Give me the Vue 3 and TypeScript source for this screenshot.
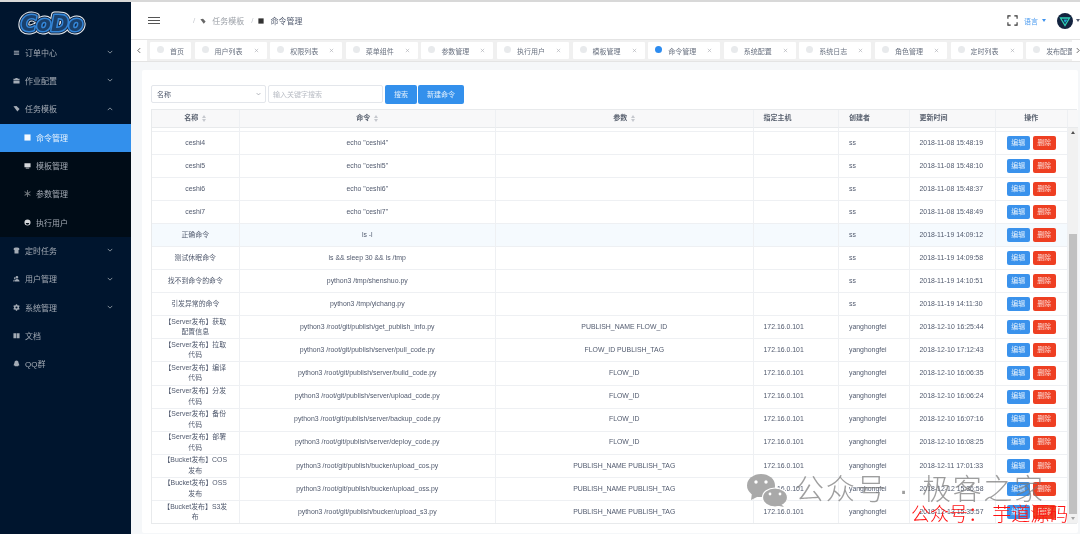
<script setup lang="ts">
type MenuItem = { text: string; icon: string; arrow?: "down" | "up"; sub?: boolean; active?: boolean }
type Row = { name: string; cmd: string; params: string; host: string; user: string; time: string; hover?: boolean }

const menu: MenuItem[] = [
	{ text: "订单中心", icon: "list", arrow: "down" },
	{ text: "作业配置", icon: "case", arrow: "down" },
	{ text: "任务模板", icon: "tag", arrow: "up" },
	{ text: "命令管理", icon: "square", sub: true, active: true },
	{ text: "模板管理", icon: "monitor", sub: true },
	{ text: "参数管理", icon: "star", sub: true },
	{ text: "执行用户", icon: "face", sub: true },
	{ text: "定时任务", icon: "shirt", arrow: "down" },
	{ text: "用户管理", icon: "people", arrow: "down" },
	{ text: "系统管理", icon: "gear", arrow: "down" },
	{ text: "文档", icon: "book" },
	{ text: "QQ群", icon: "qq" },
]

const tabs = ["首页", "用户列表", "权限列表", "菜单组件", "参数管理", "执行用户", "模板管理", "命令管理", "系统配置", "系统日志", "角色管理", "定时列表", "发布配置"]

const ip = "172.16.0.101"
const yhf = "yanghongfei"
const base = "python3 /root/git/publish/"

const rows: Row[] = [
	{ name: "ceshi4", cmd: 'echo "ceshi4"', params: "", host: "", user: "ss", time: "2018-11-08 15:48:19" },
	{ name: "ceshi5", cmd: 'echo "ceshi5"', params: "", host: "", user: "ss", time: "2018-11-08 15:48:10" },
	{ name: "ceshi6", cmd: 'echo "ceshi6"', params: "", host: "", user: "ss", time: "2018-11-08 15:48:37" },
	{ name: "ceshi7", cmd: 'echo "ceshi7"', params: "", host: "", user: "ss", time: "2018-11-08 15:48:49" },
	{ name: "正确命令", cmd: "ls -l", params: "", host: "", user: "ss", time: "2018-11-19 14:09:12", hover: true },
	{ name: "测试休眠命令", cmd: "ls && sleep 30 && ls /tmp", params: "", host: "", user: "ss", time: "2018-11-19 14:09:58" },
	{ name: "找不到命令的命令", cmd: "python3 /tmp/shenshuo.py", params: "", host: "", user: "ss", time: "2018-11-19 14:10:51" },
	{ name: "引发异常的命令", cmd: "python3 /tmp/yichang.py", params: "", host: "", user: "ss", time: "2018-11-19 14:11:30" },
	{ name: "【Server发布】获取配置信息", cmd: base + "get_publish_info.py", params: "PUBLISH_NAME FLOW_ID", host: ip, user: yhf, time: "2018-12-10 16:25:44" },
	{ name: "【Server发布】拉取代码", cmd: base + "server/pull_code.py", params: "FLOW_ID PUBLISH_TAG", host: ip, user: yhf, time: "2018-12-10 17:12:43" },
	{ name: "【Server发布】编译代码", cmd: base + "server/bulid_code.py", params: "FLOW_ID", host: ip, user: yhf, time: "2018-12-10 16:06:35" },
	{ name: "【Server发布】分发代码", cmd: base + "server/upload_code.py", params: "FLOW_ID", host: ip, user: yhf, time: "2018-12-10 16:06:24" },
	{ name: "【Server发布】备份代码", cmd: base + "server/backup_code.py", params: "FLOW_ID", host: ip, user: yhf, time: "2018-12-10 16:07:16" },
	{ name: "【Server发布】部署代码", cmd: base + "server/deploy_code.py", params: "FLOW_ID", host: ip, user: yhf, time: "2018-12-10 16:08:25" },
	{ name: "【Bucket发布】COS发布", cmd: base + "bucker/upload_cos.py", params: "PUBLISH_NAME PUBLISH_TAG", host: ip, user: yhf, time: "2018-12-11 17:01:33" },
	{ name: "【Bucket发布】OSS发布", cmd: base + "bucker/upload_oss.py", params: "PUBLISH_NAME PUBLISH_TAG", host: ip, user: yhf, time: "2018-12-12 15:36:58" },
	{ name: "【Bucket发布】S3发布", cmd: base + "bucker/upload_s3.py", params: "PUBLISH_NAME PUBLISH_TAG", host: ip, user: yhf, time: "2018-12-13 15:35:57" },
]
</script>

<template>
	<div class="page">
		<aside class="side">
			<div class="logo">
				<svg width="74" height="26" viewBox="0 0 74 26">
					<g font-family="DejaVu Sans" font-weight="700" font-style="italic" font-size="22">
						<text x="37" y="20" text-anchor="middle" textLength="62" lengthAdjust="spacingAndGlyphs" fill="#fff" stroke="#e8edf2" stroke-width="7" stroke-linejoin="round">CoDo</text>
						<text x="37" y="20" text-anchor="middle" textLength="62" lengthAdjust="spacingAndGlyphs" fill="#10233f" stroke="#10233f" stroke-width="5" stroke-linejoin="round">CoDo</text>
						<text x="37" y="20" text-anchor="middle" textLength="62" lengthAdjust="spacingAndGlyphs" fill="#3486d8" stroke="#3486d8" stroke-width="3.200" stroke-linejoin="round">CoDo</text>
						<text x="37" y="20" text-anchor="middle" textLength="62" lengthAdjust="spacingAndGlyphs" fill="#10233f" opacity="0.7">CoDo</text>
					</g>
				</svg>
			</div>
			<div v-for="m in menu" :key="m.text" class="item" :class="{ sub: m.sub, active: m.active }">
				<svg class="mi" viewBox="0 0 8 8">
					<path v-if="m.icon === 'list'" d="M1 2h6v1H1zM1 4h6v1H1zM1 6h6v.8H1z" />
					<path v-else-if="m.icon === 'case'" d="M3 1h2l.6 1H7.500v2H.5V2h1.900zM.5 4.600h7V7.500h-7z" />
					<path v-else-if="m.icon === 'tag'" d="M.5 1.500 4 1l3.500 3.500L5 7.500z" />
					<path v-else-if="m.icon === 'square'" d="M.5.5h7v7h-7z" />
					<path v-else-if="m.icon === 'monitor'" d="M.5 1.500h7v4.500h-7zM2 6.500h4v1H2z" />
					<path v-else-if="m.icon === 'star'" opacity="0.55" d="M3.500 0h1v3l2.600-1.500.5.900L5 4l2.600 1.600-.5.900L4.500 5v3h-1V5L.9 6.500.4 5.600 3 4 .4 2.400l.5-.9L3.500 3z" />
					<path v-else-if="m.icon === 'face'" fill-rule="evenodd" d="M4 .5a3.500 3.500 0 1 1 0 7 3.500 3.500 0 0 1 0-7zM2 4.500h4a2 2 0 0 1-4 0z" />
					<path v-else-if="m.icon === 'shirt'" d="M1 1l2-.5h2L7 1l.3 2-1 .4v4H1.700v-4l-1-.4z" />
					<path v-else-if="m.icon === 'people'" d="M4.500 1a1.500 1.500 0 1 1 0 3 1.500 1.500 0 0 1 0-3zM2 7.500c0-2 1-3 2.500-3S7.500 5.500 7.500 7.500zM2 2.500A1 1 0 1 1 2 4.500 1 1 0 0 1 2 2.500zM.3 7.500C.3 6 1 5 2.300 5 1.700 5.800 1.500 6.500 1.500 7.500z" />
					<path v-else-if="m.icon === 'gear'" fill-rule="evenodd" d="M3.300.3h1.400l.3 1 .9.5 1-.3.700 1.200-.8.700v1.200l.8.700-.7 1.200-1-.3-.9.5-.3 1H3.300l-.3-1-.9-.5-1 .3-.7-1.200.8-.7V3.400l-.8-.7.7-1.200 1 .3.9-.5zM4 2.800a1.200 1.200 0 1 0 0 2.400 1.200 1.200 0 0 0 0-2.400z" />
					<path v-else-if="m.icon === 'book'" d="M.5 1.500h3.200v5.500H.5zM4.300 1.500h3.200v5.500H4.300z" />
					<path v-else d="M4 .5c1.500 0 2.300 1.200 2.300 2.500 0 .6.900 1.800.9 3 0 .6-.5.500-.9 0 0 .6-.3 1-.6 1.200l-3.400 0c-.3-.2-.6-.6-.6-1.200-.4.500-.9.600-.9 0 0-1.200.9-2.400.9-3C1.700 1.700 2.500.5 4 .5z" />
				</svg>
				<span class="label">{{ m.text }}</span>
				<svg v-if="m.arrow" class="chev" viewBox="0 0 8 5">
					<path :d="m.arrow === 'down' ? 'M1 1l3 3 3-3' : 'M1 4l3-3 3 3'" />
				</svg>
			</div>
		</aside>

		<main class="main">
			<header class="top">
				<div class="burger"><i /><i /><i /></div>
				<nav class="crumbs">
					<span class="sep">/</span>
					<svg class="ci" viewBox="0 0 8 8"><path d="M.5 1.500 4 1l3.500 3.500L5 7.500z" /></svg>
					<span class="cname">任务模板</span>
					<span class="sep">/</span>
					<svg class="ci dark" viewBox="0 0 8 8"><path d="M.5.500h7v7h-7z" /></svg>
					<span class="cname cur">命令管理</span>
				</nav>
				<div class="tools">
					<svg class="full" viewBox="0 0 12 12"><path d="M1 4V1h3M8 1h3v3M11 8v3H8M4 11H1V8" /></svg>
					<span class="lang">语言</span>
					<span class="caret blue" />
					<svg class="avatar" viewBox="0 0 16 16">
						<circle cx="8" cy="8" r="8" fill="#13233f" />
						<path d="M3.500 5h9L8 12.500z" fill="none" stroke="#2fd0b5" stroke-width="1.300" />
						<path d="M6.500 6.500h4L8 10z" fill="#1f9ed6" />
					</svg>
					<span class="caret" />
				</div>
			</header>

			<div class="tabbar">
				<div class="tab-prev"><svg viewBox="0 0 5 8"><path d="M4 1 1 4l3 3" /></svg></div>
				<div class="tabs">
					<div v-for="t in tabs" :key="t" class="tab" :class="{ home: t === '首页', on: t === '命令管理' }">
						<i class="dot" />
						<span class="tname">{{ t }}</span>
						<svg v-if="t !== '首页'" class="x" viewBox="0 0 6 6"><path d="M1 1l4 4M5 1 1 5" /></svg>
					</div>
				</div>
				<div class="tab-next"><svg viewBox="0 0 5 8"><path d="M1 1l3 3-3 3" /></svg></div>
			</div>

			<section class="wrap">
				<div class="card">
					<div class="search">
						<div class="select">
							<span>名称</span>
							<svg viewBox="0 0 8 5"><path d="M1 1l3 3 3-3" /></svg>
						</div>
						<div class="input">输入关键字搜索</div>
						<button class="btn">搜索</button>
						<button class="btn new">新建命令</button>
					</div>

					<div class="table">
						<div class="cols">
							<div class="row head">
								<div class="cell mid">名称<span class="sort" /></div>
								<div class="cell mid">命令<span class="sort" /></div>
								<div class="cell mid">参数<span class="sort" /></div>
								<div class="cell">指定主机</div>
								<div class="cell">创建者</div>
								<div class="cell">更新时间</div>
								<div class="cell mid">操作</div>
							</div>
							<div class="row stub">
								<div class="cell" /><div class="cell" /><div class="cell" /><div class="cell" />
								<div class="cell" /><div class="cell" /><div class="cell" />
							</div>
							<div v-for="r in rows" :key="r.name" class="row body" :class="{ hover: r.hover }">
								<div class="cell mid">{{ r.name }}</div>
								<div class="cell mid">{{ r.cmd }}</div>
								<div class="cell mid">{{ r.params }}</div>
								<div class="cell">{{ r.host }}</div>
								<div class="cell">{{ r.user }}</div>
								<div class="cell">{{ r.time }}</div>
								<div class="cell ops">
									<button class="op">编辑</button>
									<button class="op del">删除</button>
								</div>
							</div>
						</div>
						<div class="bar">
							<div class="bar-head" />
							<div class="track">
								<i class="arr up" />
								<div class="thumb" />
								<i class="arr dn" />
							</div>
						</div>
					</div>
				</div>
			</section>
		</main>

		<div class="mark">
			<svg class="wechat" width="41" height="33" viewBox="0 0 41 33">
				<ellipse cx="14" cy="11.500" rx="14" ry="11.500" fill="#a9a9a9" />
				<path d="M5 19l-1 7 8-4z" fill="#a9a9a9" />
				<ellipse cx="28" cy="23.500" rx="12.500" ry="9.500" fill="#a9a9a9" stroke="#fff" stroke-width="1.200" />
				<path d="M34 30l3 3-7-1.500z" fill="#a9a9a9" />
				<circle cx="9" cy="8" r="1.700" fill="#fff" />
				<circle cx="19" cy="8" r="1.700" fill="#fff" />
				<circle cx="23" cy="20" r="1.400" fill="#fff" />
				<circle cx="33" cy="20" r="1.400" fill="#fff" />
			</svg>
			<span class="mtext">公众号 · 极客之家</span>
		</div>
		<div class="redmark">公众号： 芋道源码</div>
	</div>
</template>

<style>
html,
body {
	margin: 0;
	background: #f5f7f9;
}
</style>

<style scoped>
.page {
	position: relative;
	display: flex;
	width: 1080px;
	height: 534px;
	box-sizing: border-box;
	border-top: 2px solid #d8d8d8;
	overflow: hidden;
	background: #f5f7f9;
	font-family: "Liberation Sans", "Noto Sans CJK SC", sans-serif;
	color: #515a6e;
	filter: blur(0.45px);
}

/* sidebar */
.side {
	flex: 0 0 131px;
	display: flex;
	flex-direction: column;
	background: #00152e;
}

.logo {
	height: 37px;
	padding: 9px 0 0 15px;
	box-sizing: border-box;
	overflow: hidden;
}

.item {
	display: flex;
	align-items: center;
	flex: 0 0 28.33px;
	box-sizing: border-box;
	padding: 0 0 2px 13px;
	color: #a3abb5;
	font-size: 8px;
}

.item.sub {
	padding-left: 24px;
	background: #000c17;
}

.item.active {
	background: #3390ec;
	color: #e8f3fd;
}

.mi {
	flex: 0 0 7px;
	width: 7px;
	height: 7px;
	margin-right: 5px;
	fill: #a3abb5;
}

.sub .mi {
	fill: #d5d8db;
}

.active .mi {
	fill: #f4f9fe;
}

.label {
	flex: 1;
}

.chev {
	width: 6px;
	height: 4px;
	margin-right: 18px;
	fill: none;
	stroke: #aab1ba;
	stroke-width: 1;
}

/* header */
.main {
	flex: 1;
	min-width: 0;
	display: flex;
	flex-direction: column;
}

.top {
	display: flex;
	align-items: center;
	flex: 0 0 37px;
	padding-left: 17px;
	background: #fff;
}

.burger {
	display: flex;
	flex-direction: column;
	gap: 2px;
	width: 12px;
}

.burger i {
	height: 1px;
	background: #555;
}

.crumbs {
	display: flex;
	align-items: center;
	margin-left: 33px;
	font-size: 8px;
	color: #9a9fa6;
}

.sep {
	color: #c5c8ce;
}

.ci {
	width: 6px;
	height: 6px;
	margin: 0 6px 0 5px;
	fill: #666;
}

.ci.dark {
	fill: #333;
}

.cname {
	margin-right: 7px;
}

.cur {
	color: #515a6e;
}

.tools {
	display: flex;
	align-items: center;
	margin-left: auto;
}

.full {
	width: 11px;
	height: 11px;
	fill: none;
	stroke: #333;
	stroke-width: 1.200;
	margin-right: 6px;
}

.lang {
	font-size: 7px;
	color: #4a9bf0;
	margin-right: 4px;
}

.caret {
	width: 0;
	height: 0;
	border: 2.500px solid transparent;
	border-top: 3px solid #515a6e;
	border-bottom: 0;
}

.caret.blue {
	border-top-color: #3f93ee;
	margin-right: 11px;
}

.avatar {
	width: 16px;
	height: 16px;
	margin-right: 3px;
}

/* tabs */
.tabbar {
	display: flex;
	flex: 0 0 23px;
	box-sizing: border-box;
	border-top: 1px solid #e4e4e4;
	border-bottom: 1px solid #e4e4e4;
	background: #f0f0f0;
	overflow: hidden;
}

.tab-prev {
	flex: 0 0 16px;
	display: flex;
	align-items: center;
	justify-content: center;
	background: #fff;
}

.tab-prev svg {
	width: 4px;
	height: 7px;
	fill: none;
	stroke: #444;
	stroke-width: 1;
}

.tabs {
	flex: 1;
	min-width: 0;
	display: flex;
	gap: 3.600px;
	padding: 2px 0 0 3px;
	overflow: hidden;
}

.tab-next {
	flex: 0 0 8px;
	display: flex;
	align-items: center;
	padding-left: 4.500px;
	box-sizing: border-box;
	background: #fff;
}

.tab-next svg {
	width: 4px;
	height: 7px;
	fill: none;
	stroke: #444;
	stroke-width: 1;
}

.tab {
	flex: 0 0 72px;
	display: flex;
	align-items: center;
	height: 17px;
	box-sizing: border-box;
	padding-left: 7px;
	background: #fff;
	border-radius: 1px;
	font-size: 7px;
	color: #6a7280;
}

.tab.home {
	flex-basis: 41px;
}

.dot {
	flex: 0 0 7px;
	height: 7px;
	border-radius: 50%;
	background: #e8eaec;
	margin: -2px 6px 0 0;
}

.on .dot {
	background: #2d8cf0;
}

.tname {
	flex: 0 0 auto;
}

.x {
	width: 5px;
	height: 5px;
	margin-left: 11px;
	fill: none;
	stroke: #a8abb2;
	stroke-width: 0.700;
}

/* card */
.wrap {
	flex: 1;
	min-height: 0;
	padding: 8px 2px 1px 11px;
}

.card {
	height: 100%;
	box-sizing: border-box;
	padding: 15px 1px 0 9px;
	background: #fff;
	border-radius: 2px;
}

.search {
	display: flex;
	align-items: center;
	gap: 2px;
	height: 18px;
	margin-bottom: 6px;
}

.select,
.input {
	width: 115px;
	height: 18px;
	box-sizing: border-box;
	border: 1px solid #e3e6eb;
	border-radius: 2px;
	display: flex;
	align-items: center;
	padding-left: 5px;
	font-size: 7px;
}

.select span {
	flex: 1;
}

.select svg {
	width: 5px;
	height: 4px;
	margin-right: 4px;
	fill: none;
	stroke: #8a8f99;
	stroke-width: 1;
}

.input {
	color: #b8bcc4;
	padding-left: 4px;
}

.btn {
	height: 19px;
	width: 32px;
	padding: 0;
	border: 0;
	border-radius: 2px;
	background: #3390ec;
	color: #e3f0fc;
	font: inherit;
	font-size: 7px;
}

.btn.new {
	width: 46px;
	margin-left: -1px;
}

/* table */
.table {
	display: flex;
	height: 415px;
	box-sizing: border-box;
	border: 1px solid #e8eaec;
	border-right: 0;
}

.cols {
	flex: 0 0 915.500px;
	min-width: 0;
	overflow: hidden;
}

.row {
	display: grid;
	grid-template-columns: 87.500px 256.500px 257.500px 85.500px 70.500px 86px 72.500px;
}

.cell {
	display: flex;
	align-items: center;
	min-width: 0;
	box-sizing: border-box;
	padding: 0 10px;
	border-right: 1px solid #eef0f3;
	border-bottom: 1px solid #eef0f3;
	font-size: 6.900px;
	line-height: 10.300px;
}

.cell.mid {
	justify-content: center;
	text-align: center;
}

.head {
	height: 18px;
	background: #f8f8f9;
}

.head .cell {
	font-size: 7px;
	font-weight: 700;
	color: #5a6270;
	border-bottom-color: #e8eaec;
}

.sort {
	position: relative;
	width: 4px;
	height: 7px;
	margin-left: 4px;
}

.sort::before,
.sort::after {
	content: "";
	position: absolute;
	left: 0;
	border: 2px solid transparent;
}

.sort::before {
	top: 0;
	border-bottom: 3px solid #c5c8ce;
	border-top: 0;
}

.sort::after {
	bottom: 0;
	border-top: 3px solid #c5c8ce;
	border-bottom: 0;
}

.stub {
	height: 4px;
}

.stub .cell {
	padding: 0;
}

.body {
	height: 23.050px;
}

.body:last-child .cell {
	border-bottom: 0;
}

.hover {
	background: #f5fafe;
}

.ops {
	justify-content: center;
	gap: 2.500px;
	padding: 0;
}

.op {
	width: 23.500px;
	height: 14px;
	padding: 0;
	border: 0;
	border-radius: 2px;
	background: #3a92ec;
	color: #e3f0fc;
	font: inherit;
	font-size: 6.900px;
}

.op.del {
	background: #ee3f22;
	color: #fbdcd6;
}

/* scrollbar */
.bar {
	flex: 0 0 10px;
	display: flex;
	flex-direction: column;
}

.bar-head {
	flex: 0 0 18px;
	background: #f8f8f9;
	border-bottom: 1px solid #e8eaec;
	box-sizing: border-box;
}

.track {
	flex: 1;
	display: flex;
	flex-direction: column;
	align-items: center;
	background: #f1f1f1;
	padding: 3px 0;
}

.thumb {
	width: 8px;
	height: 280px;
	margin-top: auto;
	background: #c1c1c1;
}

.arr {
	width: 0;
	height: 0;
	border: 2px solid transparent;
}

.arr.up {
	border-bottom: 3px solid #505050;
	border-top: 0;
}

.arr.dn {
	margin-top: 3px;
	border-top: 3px solid #a3a3a3;
	border-bottom: 0;
}

/* watermarks over the page */
.mark {
	position: absolute;
	left: 747px;
	top: 470px;
	display: flex;
	align-items: center;
	pointer-events: none;
}

.mtext {
	margin-left: 7px;
	font-size: 29px;
	font-weight: 300;
	letter-spacing: 1.700px;
	word-spacing: 2px;
	line-height: 36px;
	color: rgba(120, 120, 120, 0.72);
	white-space: nowrap;
}

.redmark {
	position: absolute;
	left: 911px;
	top: 502px;
	font-size: 19px;
	font-weight: 300;
	line-height: 22px;
	color: #f11;
	white-space: nowrap;
	pointer-events: none;
}
</style>
